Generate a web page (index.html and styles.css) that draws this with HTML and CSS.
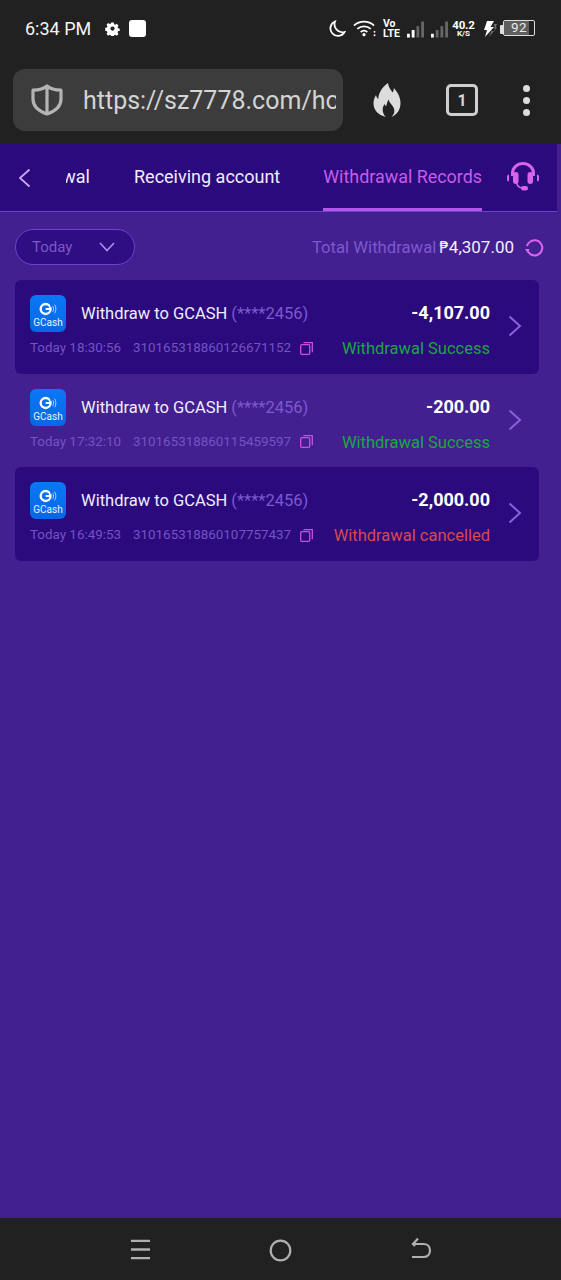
FILE: index.html
```html
<!DOCTYPE html>
<html lang="en">
<head>
<meta charset="utf-8">
<title>Withdrawal Records</title>
<link rel="stylesheet" href="styles.css">
</head>
<body>
<div class="phone">
  <div class="status">
    <span class="time">6:34 PM</span>
    <svg class="gear" viewBox="0 0 16 16"><path fill="#fff" fill-rule="evenodd" d="M6.500 1h3l.4 2 1.400.6 1.800-1.100 2 2.100-1.100 1.700.6 1.500 2 .4v2.600l-2 .5-.6 1.400 1.100 1.800-2 2-1.800-1.100-1.400.6-.4 2h-3l-.4-2-1.400-.6-1.800 1.100-2-2 1.100-1.800-.6-1.400-2-.5V7.200l2-.4.6-1.500-1.100-1.700 2-2.100 1.800 1.100 1.400-.6zM8 5.600a2.500 2.500 0 1 0 0 5 2.500 2.500 0 0 0 0-5z" transform="translate(.8 .8) scale(.9)"/></svg>
    <span class="square"></span>
    <span class="grow"></span>
    <svg class="moon" viewBox="0 0 18 18"><path fill="none" stroke="#fff" stroke-width="1.800" d="M7 1.500a7.500 7.500 0 1 0 9.500 10.500A8 8 0 0 1 7 1.500z"/></svg>
    <svg class="wifi" viewBox="0 0 24 18"><g fill="none" stroke="#fff" stroke-width="1.800"><path d="M1 6.500c6-5.500 15-5.500 21 0"/><path d="M4.500 10c4-3.500 10-3.500 14 0"/><path d="M8 13.200c2-1.600 5-1.600 7 0"/></g><circle cx="11.500" cy="16" r="1.700" fill="#fff"/><circle cx="22.500" cy="13" r="1" fill="#fff"/><circle cx="22.500" cy="16.500" r="1" fill="#fff"/></svg>
    <span class="volte"><span>Vo</span><span>LTE</span></span>
    <svg class="bars" viewBox="0 0 18 17"><rect x="0" y="13" width="3" height="4" fill="#fff"/><rect x="5" y="9" width="3" height="8" fill="#fff"/><rect x="10" y="5" width="3" height="12" fill="#666"/><rect x="15" y="0" width="3" height="17" fill="#666"/></svg>
    <svg class="bars" viewBox="0 0 18 17"><rect x="0" y="13" width="3" height="4" fill="#fff"/><rect x="5" y="9" width="3" height="8" fill="#666"/><rect x="10" y="5" width="3" height="12" fill="#666"/><rect x="15" y="0" width="3" height="17" fill="#666"/></svg>
    <span class="speed"><span class="speed-n">40.2</span><span class="speed-u">K/S</span></span>
    <svg class="bolt" viewBox="0 0 16 17"><path fill="#fff" d="M6 0h7L9.500 6H13L4 16l2-7H3z"/><path fill="#888" d="M13 3h3l-1.500 3.500H16L8 16l2.500-6H14z" opacity=".8"/></svg>
    <span class="battery-tip"></span>
    <span class="battery"><span class="battery-fill"></span><span class="battery-n">92</span></span>
  </div>

  <div class="toolbar">
    <div class="url">
      <svg class="shield" viewBox="0 0 34 32"><path fill="none" stroke="#b4b4b4" stroke-width="3.200" stroke-linejoin="round" d="M17 2c3 2.600 8 4 14 4.200V15c0 7-5 12-14 15C8 27 3 22 3 15V6.200C9 6 14 4.600 17 2z"/><path stroke="#b4b4b4" stroke-width="3.200" d="M17 3v26"/></svg>
      <span class="url-text">https://sz7778.com/home</span>
    </div>
    <svg class="flame" viewBox="0 0 28 34"><path fill="#dcdcdc" d="M15 0c.5 4 2.500 6.500 4.500 9.500C20.500 8 21 6.500 20.800 5c3.700 4 6.700 9 6.700 15 0 7-3.500 11.500-9 14 2.500-2.500 3.500-5 2.500-8.500-1-3-4-4.500-5.500-9-1.500 3-1.500 4.500-2.500 7-.5-.7-1-1.500-1.300-2.500-1.500 2-2.200 3.700-2 6 .2 3 1.300 5.500 3.300 7C5 32 .5 27 .5 20.500c0-3.500 1-6 2.500-8.500.3 1.700 1 3 2.300 4C5.500 9.500 9.500 4 15 0z"/></svg>
    <span class="tabs">1</span>
    <span class="dots"><i></i><i></i><i></i></span>
  </div>

  <div class="nav">
    <div class="nav-inner">
      <svg class="back" viewBox="0 0 13 20"><path fill="none" stroke="#cba6f5" stroke-width="1.800" d="M11.500 1.500 2 10l9.500 8.500"/></svg>
      <div class="tab-clip"><span class="tab-cut">Withdrawal</span></div>
      <span class="tab">Receiving account</span>
      <span class="tab tab-active">Withdrawal Records</span>
      <svg class="headset" viewBox="0 0 34 30"><g fill="#d764ea"><path fill="none" stroke="#d764ea" stroke-width="3" d="M6.500 14V11a10.500 9.500 0 0 1 21 0v3"/><rect x="7" y="10" width="5.500" height="12" rx="2.700"/><rect x="21.500" y="10" width="5.500" height="12" rx="2.700"/><path d="M1 14.500c0-1 .8-2 2-2v7c-1.200 0-2-1-2-2zM33 14.500c0-1-.8-2-2-2v7c1.200 0 2-1 2-2z"/><path fill="none" stroke="#d764ea" stroke-width="1.600" d="M11 21c0 3 2 4.500 5 5"/><rect x="15" y="24" width="7" height="4.500" rx="2.200"/></g></svg>
    </div>
  </div>

  <main class="content">
    <div class="filter-row">
      <div class="select">
        <span>Today</span>
        <svg class="caret" viewBox="0 0 16 10"><path fill="none" stroke="#a98af0" stroke-width="1.700" d="M1 1l7 7.500L15 1"/></svg>
      </div>
      <div class="total">
        <span class="total-label">Total Withdrawal</span><span class="total-value"><span class="peso">₱</span>4,307.00</span>
        <svg class="refresh" viewBox="0 0 20 20"><path fill="none" stroke="#d764ea" stroke-width="2.200" d="M5 4.200A8 8 0 1 1 2.300 12"/><path fill="none" stroke="#d764ea" stroke-width="2.200" d="M2 8.500A8 8 0 0 1 5 4.200"/><path fill="#d764ea" d="M0 11.500h5L2.500 15.500z"/></svg>
      </div>
    </div>

    <div class="records">
      <article class="record record-dark">
        <div class="row-main">
          <div class="gcash"><svg viewBox="0 0 24 14" class="g-mark"><circle cx="9" cy="7" r="5.200" fill="none" stroke="#fff" stroke-width="2.400"/><path fill="#fff" d="M9 6h5.500v2H9z"/><rect x="14" y="0" width="2" height="5" fill="#0a6fe8"/><path fill="none" stroke="#a9d4ff" stroke-width="1" d="M16.500 4c1 2 1 4 0 6M18.500 2.500c1.600 3 1.600 6 0 9"/></svg><span class="g-name">GCash</span></div>
          <div class="title">Withdraw to GCASH <span class="acct">(****2456)</span></div>
          <div class="amount">-4,107.00</div>
        </div>
        <div class="row-sub">
          <span class="date">Today 18:30:56</span>
          <span class="serial">310165318860126671152</span>
          <svg class="copy" viewBox="0 0 13 13"><rect x=".7" y="2.700" width="9" height="9.600" rx="1" fill="none" stroke="#c94fe0" stroke-width="1.300"/><path fill="none" stroke="#c94fe0" stroke-width="1.300" d="M3.500.7h8.800v9.500"/></svg>
          <span class="state state-ok">Withdrawal Success</span>
        </div>
        <svg class="chev" viewBox="0 0 14 22"><path fill="none" stroke="#8a5fe0" stroke-width="2" d="M1.500 1.500 12 11 1.500 20.500"/></svg>
      </article>

      <article class="record">
        <div class="row-main">
          <div class="gcash"><svg viewBox="0 0 24 14" class="g-mark"><circle cx="9" cy="7" r="5.200" fill="none" stroke="#fff" stroke-width="2.400"/><path fill="#fff" d="M9 6h5.500v2H9z"/><rect x="14" y="0" width="2" height="5" fill="#0a6fe8"/><path fill="none" stroke="#a9d4ff" stroke-width="1" d="M16.500 4c1 2 1 4 0 6M18.500 2.500c1.600 3 1.600 6 0 9"/></svg><span class="g-name">GCash</span></div>
          <div class="title">Withdraw to GCASH <span class="acct">(****2456)</span></div>
          <div class="amount">-200.00</div>
        </div>
        <div class="row-sub">
          <span class="date">Today 17:32:10</span>
          <span class="serial">310165318860115459597</span>
          <svg class="copy" viewBox="0 0 13 13"><rect x=".7" y="2.700" width="9" height="9.600" rx="1" fill="none" stroke="#c94fe0" stroke-width="1.300"/><path fill="none" stroke="#c94fe0" stroke-width="1.300" d="M3.500.7h8.800v9.500"/></svg>
          <span class="state state-ok">Withdrawal Success</span>
        </div>
        <svg class="chev" viewBox="0 0 14 22"><path fill="none" stroke="#8a5fe0" stroke-width="2" d="M1.500 1.500 12 11 1.500 20.500"/></svg>
      </article>

      <article class="record record-dark">
        <div class="row-main">
          <div class="gcash"><svg viewBox="0 0 24 14" class="g-mark"><circle cx="9" cy="7" r="5.200" fill="none" stroke="#fff" stroke-width="2.400"/><path fill="#fff" d="M9 6h5.500v2H9z"/><rect x="14" y="0" width="2" height="5" fill="#0a6fe8"/><path fill="none" stroke="#a9d4ff" stroke-width="1" d="M16.500 4c1 2 1 4 0 6M18.500 2.500c1.600 3 1.600 6 0 9"/></svg><span class="g-name">GCash</span></div>
          <div class="title">Withdraw to GCASH <span class="acct">(****2456)</span></div>
          <div class="amount">-2,000.00</div>
        </div>
        <div class="row-sub">
          <span class="date">Today 16:49:53</span>
          <span class="serial">310165318860107757437</span>
          <svg class="copy" viewBox="0 0 13 13"><rect x=".7" y="2.700" width="9" height="9.600" rx="1" fill="none" stroke="#c94fe0" stroke-width="1.300"/><path fill="none" stroke="#c94fe0" stroke-width="1.300" d="M3.500.7h8.800v9.500"/></svg>
          <span class="state state-bad">Withdrawal cancelled</span>
        </div>
        <svg class="chev" viewBox="0 0 14 22"><path fill="none" stroke="#8a5fe0" stroke-width="2" d="M1.500 1.500 12 11 1.500 20.500"/></svg>
      </article>
    </div>
  </main>

  <div class="sysnav">
    <svg class="sys-menu" viewBox="0 0 22 22"><path stroke="#b0b0b0" stroke-width="2.400" d="M1 2h20M1 11h20M1 20h20"/></svg>
    <svg class="sys-home" viewBox="0 0 23 23"><circle cx="11.500" cy="11.500" r="9.800" fill="none" stroke="#b0b0b0" stroke-width="2.200"/></svg>
    <svg class="sys-back" viewBox="0 0 22 22"><path fill="none" stroke="#b0b0b0" stroke-width="2.200" d="M2 20h11.500c4 0 6.500-2.800 6.500-6.500S17.500 7 13.500 7H3M8 1.500 3 7l2 2"/></svg>
  </div>
</div>
</body>
</html>
```
FILE: styles.css
```css
* { box-sizing: border-box; }
html, body { margin: 0; padding: 0; }
body { font-family: Roboto, "Liberation Sans", sans-serif; background: #212121; }
.phone { width: 561px; height: 1280px; display: flex; flex-direction: column; overflow: hidden; background: #212121; }

/* status bar */
.status { height: 58px; padding: 18px 26px 0 25px; display: flex; align-items: flex-start; color: #fff; flex: none; }
.time { font-size: 18px; line-height: 21px; width: 67px; color: #f4f4f4; }
.gear { width: 15px; height: 15px; margin: 3px 0 0 13px; }
.square { width: 17px; height: 17px; border-radius: 3px; background: #fff; margin: 2px 0 0 9px; }
.grow { flex: 1; }
.moon { width: 18px; height: 18px; margin: 2px 0 0 0; }
.wifi { width: 23px; height: 18px; margin: 1px 0 0 7px; }
.volte { display: flex; flex-direction: column; font-size: 10.500px; line-height: 9.500px; font-weight: 700; width: 17px; margin: 1px 0 0 7px; }
.bars { width: 17px; height: 17px; margin: 3px 0 0 7px; }
.speed { display: flex; flex-direction: column; align-items: center; margin: 2px 0 0 5px; width: 23px; font-weight: 700; }
.bars + .speed { margin-left: 4px; }
.speed-n { font-size: 11.500px; line-height: 10px; letter-spacing: -.2px; }
.speed-u { font-size: 8px; line-height: 8px; }
.bolt { width: 16px; height: 17px; margin: 3px 0 0 6px; }
.battery-tip { width: 3px; height: 9px; background: #ddd; margin: 7px 0 0 3px; border-radius: 1px 0 0 1px; }
.battery { position: relative; width: 32px; height: 16px; border: 1.500px solid #ddd; border-radius: 2px; margin: 2px 0 0 0; }
.battery-fill { display: block; height: 100%; width: 84%; background: #5e5e5e; }
.battery-n { position: absolute; left: 0; right: 0; top: 0; text-align: center; font-size: 13.500px; line-height: 13px; color: #e8e8e8; letter-spacing: .3px; }

/* toolbar */
.toolbar { height: 86px; padding: 11px 25px 13px 13px; display: flex; align-items: center; flex: none; }
.url { width: 330px; height: 62px; background: #3c3c3c; border-radius: 12px; display: flex; align-items: center; padding: 0 0 0 17px; overflow: hidden; }
.shield { width: 34px; height: 32px; flex: none; }
.url-text { font-size: 25px; color: #d4d4d4; margin-left: 19px; white-space: nowrap; overflow: hidden; width: 253px; flex: none; }
.flame { width: 28px; height: 34px; margin-left: 30px; flex: none; }
.tabs { width: 32px; height: 32px; border: 3px solid #cfcfcf; border-radius: 5px; margin-left: 45px; display: flex; align-items: center; justify-content: center; color: #d4d4d4; font-size: 16px; font-weight: 700; flex: none; }
.dots { display: flex; flex-direction: column; gap: 5px; margin-left: 45px; flex: none; }
.dots i { width: 7px; height: 7px; border-radius: 50%; background: #dcdcdc; display: block; }

/* in-page nav */
.nav { height: 68px; flex: none; background: #43208f; }
.nav-inner { height: 68px; width: 557px; background: #2b0a7e; border-bottom: 1px solid #6c42cf; display: flex; align-items: flex-start; position: relative; }
.back { width: 13px; height: 20px; margin: 24px 0 0 18px; flex: none; }
.tab-clip { width: 24px; margin-left: 35px; overflow: hidden; height: 66px; display: flex; justify-content: flex-end; flex: none; }
.tab-cut { font-size: 18px; line-height: 66px; color: #f1ecff; white-space: nowrap; }
.tab { font-size: 18px; line-height: 66px; height: 67px; color: #f1ecff; white-space: nowrap; margin-left: 44px; flex: none; }
.tab-active { color: #c65ce8; border-bottom: 3px solid #b455ee; margin-left: 43px; font-size: 17.900px; }
.headset { width: 34px; height: 30px; margin: 18px 0 0 24px; flex: none; }

/* content */
.content { flex: 1; background: #43208f; padding: 17px 22px 0 15px; }
.filter-row { display: flex; align-items: center; justify-content: space-between; height: 36px; }
.select { width: 120px; height: 36px; border: 1px solid #6c42cf; border-radius: 18px; background: #2f0d82; display: flex; align-items: center; padding: 0 19px 0 16px; justify-content: space-between; font-size: 15px; color: #7a58c8; }
.caret { width: 16px; height: 10px; }
.total { display: flex; align-items: center; font-size: 16.700px; }
.total-label { color: #7d58cf; margin-right: 3px; }
.total-value { color: #f3eeff; font-size: 17px; }
.peso { font-family: "DejaVu Sans", sans-serif; font-size: 15px; }
.refresh { width: 19px; height: 19px; margin-left: 11px; margin-right: -5px; }

.records { margin: 15px 0 0 0; display: flex; flex-direction: column; }
.record { height: 93.500px; position: relative; padding: 15px 49px 0 15px; border-radius: 6px; }
.record-dark { background: #2b0a7e; }
.row-main { display: flex; align-items: flex-start; height: 37px; }
.gcash { width: 36px; height: 37px; border-radius: 6px; background: linear-gradient(#0a78f5, #0767e6); display: flex; flex-direction: column; align-items: center; flex: none; }
.g-mark { width: 23px; height: 14px; margin-top: 7px; }
.g-name { font-size: 10px; line-height: 11px; color: #e8f3ff; font-weight: 400; margin-top: 1px; }
.title { font-size: 16.500px; line-height: 20px; color: #f1ecff; margin: 9px 0 0 15px; white-space: nowrap; flex: 1; }
.acct { color: #7d58cf; }
.amount { font-size: 18px; line-height: 21px; font-weight: 700; color: #fff; margin-top: 7px; white-space: nowrap; }
.row-sub { display: flex; align-items: center; height: 20px; margin-top: 6px; }
.date, .serial { font-size: 13.400px; line-height: 20px; color: #7453c2; white-space: nowrap; }
.serial { margin-left: 12px; }
.copy { width: 13px; height: 13px; margin-left: 9px; flex: none; }
.state { font-size: 16.500px; line-height: 20px; margin: 2px 0 0 auto; white-space: nowrap; }
.state-ok { color: #1ca63f; }
.state-bad { color: #d9484f; }
.chev { position: absolute; right: 17px; top: 35px; width: 14px; height: 22px; }

/* system nav */
.sysnav { height: 62px; flex: none; background: #212121; position: relative; display: flex; align-items: flex-start; padding: 21px 0 0 130px; }
.sys-menu { width: 21px; height: 21px; flex: none; }
.sys-home { width: 23px; height: 23px; margin: 0 0 0 118px; flex: none; }
.sys-back { width: 22px; height: 22px; margin: -2px 0 0 118px; flex: none; }
```
